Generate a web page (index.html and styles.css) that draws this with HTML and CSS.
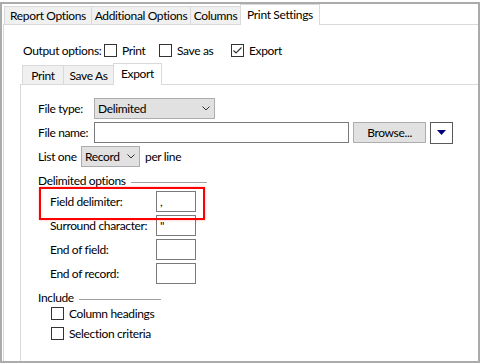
FILE: index.html
```html
<!DOCTYPE html>
<html>
<head>
<meta charset="utf-8">
<link rel="stylesheet" href="styles.css">
</head>
<body>
<div class="frame">
  <div class="strip outer-strip">
    <div class="tab t-report">Report Options</div>
    <div class="tab t-add">Additional Options</div>
    <div class="tab t-cols">Columns</div>
    <div class="tab sel t-print">Print Settings</div>
  </div>
  <div class="page outer-page">
    <div class="output-row">
      <span class="output-label">Output options:</span>
      <span class="chk item-print"><span class="box"></span>Print</span>
      <span class="chk item-save"><span class="box"></span>Save as</span>
      <span class="chk"><span class="box"><svg width="11" height="11" viewBox="0 0 11 11"><polyline points="1.5,5.5 4,8 9.5,2.5" fill="none" stroke="#333" stroke-width="1.2"/></svg></span>Export</span>
    </div>
    <div class="inner">
      <div class="strip inner-strip">
        <div class="tab i-print">Print</div>
        <div class="tab i-save">Save As</div>
        <div class="tab sel i-export">Export</div>
      </div>
      <div class="page inner-page">
        <div class="row">
          <span class="lbl">File type:</span>
          <div class="select sel-type"><span>Delimited</span><svg width="8" height="5" viewBox="0 0 8 5"><polyline points="0.5,0.5 4,4 7.5,0.5" fill="none" stroke="#333" stroke-width="1"/></svg></div>
        </div>
        <div class="row">
          <span class="lbl">File name:</span>
          <div class="input input-name"></div>
          <div class="btn btn-browse">Browse...</div>
          <div class="btn-arrow"><svg width="9" height="5" viewBox="0 0 9 5"><polygon points="0,0 9,0 4.5,5" fill="#000080"/></svg></div>
        </div>
        <div class="row">
          <span class="lbl lbl-list">List one</span>
          <div class="select sel-rec"><span>Record</span><svg width="8" height="5" viewBox="0 0 8 5"><polyline points="0.5,0.5 4,4 7.5,0.5" fill="none" stroke="#333" stroke-width="1"/></svg></div>
          <span class="perline">per line</span>
        </div>
        <div class="delim">
          <div class="group-head gh-delim"><span>Delimited options</span><span class="group-line"></span></div>
          <div class="frow"><span class="flbl">Field delimiter:</span><div class="fbox">,</div></div>
          <div class="frow"><span class="flbl">Surround character:</span><div class="fbox">"</div></div>
          <div class="frow"><span class="flbl">End of field:</span><div class="fbox"></div></div>
          <div class="frow"><span class="flbl">End of record:</span><div class="fbox"></div></div>
          <div class="highlight"></div>
        </div>
        <div class="group-head gh-inc"><span>Include</span><span class="group-line"></span></div>
        <div class="crow c1"><span class="box"></span><span class="ctext">Column headings</span></div>
        <div class="crow c2"><span class="box"></span><span class="ctext">Selection criteria</span></div>
      </div>
    </div>
  </div>
</div>
</body>
</html>
```

FILE: styles.css
```css
html, body {
  margin: 0;
  padding: 0;
  background: #fff;
}
body {
  font-family: Lato, "Noto Sans", sans-serif;
  font-size: 12px;
  letter-spacing: -0.35px;
  color: #000;
  line-height: 15px;
}
.frame {
  width: 476px;
  height: 357px;
  margin-top: 2px;
  border: 2px solid #ababab;
  overflow: hidden;
  background: #fff;
}
.strip {
  display: flex;
  align-items: flex-end;
  padding-left: 2px;
  position: relative;
  z-index: 2;
}
.outer-strip { height: 21px; }
.inner-strip { height: 22px; }
.tab {
  box-sizing: border-box;
  height: 18px;
  margin-bottom: 1px;
  margin-right: -1px;
  border: 1px solid #d9d9d9;
  border-bottom: none;
  background: #f0f0f0;
  display: flex;
  align-items: center;
  justify-content: center;
  white-space: nowrap;
}
.inner-strip .tab { height: 19px; }
.tab.sel {
  background: #fff;
  height: 21px;
  margin-bottom: 0;
  position: relative;
  z-index: 3;
  padding-bottom: 2px;
}
.inner-strip .tab.sel { height: 22px; }
.t-report { width: 88px; }
.t-add { width: 100px; }
.t-cols { width: 51px; }
.t-print { width: 80px; }
.i-print { width: 42px; }
.i-save { width: 51px; }
.i-export { width: 49px; }
.page {
  margin-top: -1px;
  border-top: 1px solid #d9d9d9;
  border-left: 1px solid #d9d9d9;
  background: #fff;
}
.outer-page {
  margin-left: 1px;
  padding: 19px 0 0 19px;
  height: 400px;
}
.output-row {
  display: flex;
  align-items: center;
  height: 13px;
  white-space: nowrap;
}
.output-label { width: 81px; flex: none; }
.chk {
  display: flex;
  align-items: center;
  white-space: nowrap;
}
.item-print { width: 55px; }
.item-save { width: 72px; }
.box {
  box-sizing: border-box;
  width: 13px;
  height: 13px;
  border: 1px solid #333;
  background: #fff;
  margin-right: 5px;
  flex: none;
  display: flex;
  align-items: center;
  justify-content: center;
}
.box svg { display: block; }
.inner {
  margin-left: -3px;
  margin-top: 6px;
}
.inner-page {
  width: 480px;
  height: 300px;
  padding: 13px 0 0 17px;
}
.row {
  display: flex;
  align-items: center;
  height: 21px;
  white-space: nowrap;
}
.row + .row { margin-top: 3px; }
.lbl { width: 56px; flex: none; }
.lbl-list { width: 43px; }
.select {
  box-sizing: border-box;
  height: 21px;
  border: 1px solid #adadad;
  background: #e1e1e1;
  display: flex;
  align-items: center;
  justify-content: space-between;
  padding: 0 4px 0 3px;
  flex: none;
}
.select svg { display: block; }
.sel-type { width: 121px; }
.sel-rec { width: 59px; }
.perline { margin-left: 5px; }
.input {
  box-sizing: border-box;
  height: 21px;
  border: 1px solid #7a7a7a;
  background: #fff;
  flex: none;
}
.input-name { width: 255px; }
.btn {
  box-sizing: border-box;
  height: 21px;
  border: 1px solid #adadad;
  background: #e1e1e1;
  display: flex;
  align-items: center;
  justify-content: center;
  flex: none;
}
.btn-browse { width: 73px; margin-left: 4px; }
.btn-arrow {
  box-sizing: border-box;
  width: 23px;
  height: 22px;
  margin-left: 4px;
  border: 1px solid #5a5a5a;
  background: #fff;
  display: flex;
  align-items: center;
  justify-content: center;
  flex: none;
}
.btn-arrow svg { display: block; }
.delim { position: relative; }
.group-head {
  display: flex;
  align-items: center;
  height: 15px;
  margin-top: 6px;
  white-space: nowrap;
}
.gh-delim { width: 169px; }
.gh-inc { width: 123px; }
.group-line {
  flex: 1;
  margin-left: 5px;
  margin-top: 3px;
  border-top: 1px solid #a0a0a0;
}
.frow {
  display: flex;
  align-items: center;
  height: 21px;
  padding-left: 12px;
  margin-top: 3px;
  white-space: nowrap;
}
.flbl { width: 106px; flex: none; }
.fbox {
  box-sizing: border-box;
  width: 40px;
  height: 21px;
  border: 1px solid #7a7a7a;
  background: #fff;
  padding-left: 3px;
  line-height: 19px;
  flex: none;
}
.highlight {
  position: absolute;
  left: 1px;
  top: 14px;
  width: 166px;
  height: 33px;
  box-sizing: border-box;
  border: 2px solid #f00;
  box-shadow: 0 0 2px rgba(255, 0, 0, 0.35);
}
.crow {
  display: flex;
  align-items: center;
  height: 13px;
  padding-left: 13px;
  white-space: nowrap;
}
.crow .box { margin-right: 5px; }
.c1 { margin-top: 2px; }
.c2 { margin-top: 7px; }
```
